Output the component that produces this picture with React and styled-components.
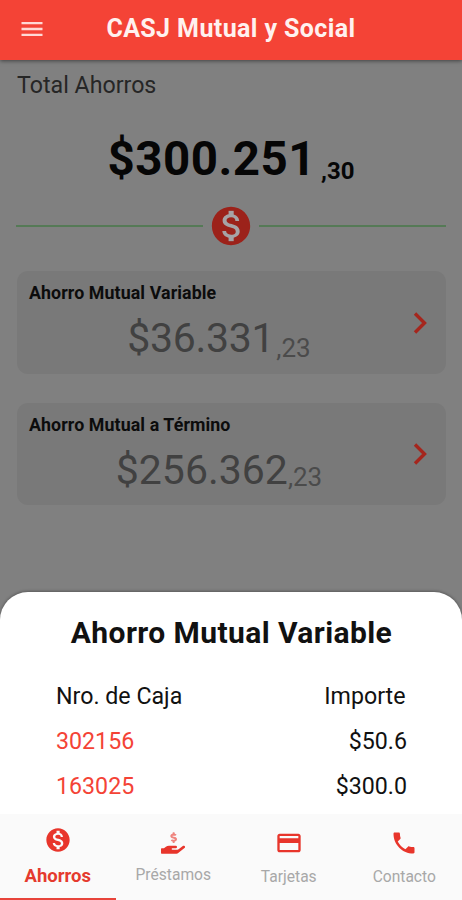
import React from 'react';
import styled, { createGlobalStyle } from 'styled-components';
import { MdMenu, MdMonetizationOn, MdCreditCard, MdPhone } from 'react-icons/md';
import { FaHandHoldingUsd } from 'react-icons/fa';

const GlobalStyle = createGlobalStyle`
  * { box-sizing: border-box; }
  body { margin: 0; font-family: Roboto, "Liberation Sans", sans-serif; }
`;

const Screen = styled.div`
  width: 462px;
  height: 900px;
  display: flex;
  flex-direction: column;
  overflow: hidden;
  background: #808080;
`;

const Header = styled.header`
  position: relative;
  height: 60px;
  flex: none;
  display: grid;
  grid-template-columns: 63px 1fr 63px;
  align-items: center;
  justify-items: center;
  padding-bottom: 2px;
  background: #f44336;
  color: #fff;
  box-shadow: 0 1px 4px rgba(0, 0, 0, 0.5);
`;

const MenuButton = styled.button`
  display: flex;
  padding: 0;
  border: 0;
  background: none;
  color: #ffd9d5;
  font-size: 28px;
`;

const Title = styled.h1`
  margin: 0;
  font-size: 25px;
  line-height: 30px;
  font-weight: 700;
  white-space: nowrap;
  color: #fff1ef;
  letter-spacing: 0.4px;
`;

const Main = styled.main`
  flex: 1;
  min-height: 0;
  padding: 10px 16px 0 16px;
`;

const SectionLabel = styled.h2`
  margin: 0 0 0 1px;
  font-size: 23.2px;
  line-height: 30px;
  font-weight: 400;
  color: #262626;
`;

const Total = styled.div`
  display: flex;
  justify-content: center;
  align-items: baseline;
  height: 58px;
  margin-top: 30px;
  line-height: 58px;
  font-weight: 700;
  color: #060606;
`;

const TotalWhole = styled.span`
  font-size: 47.5px;
  letter-spacing: 0.5px;
`;

const TotalCents = styled.span`
  position: relative;
  top: 4px;
  margin-left: 5px;
  font-size: 24px;
`;

const Divider = styled.div`
  display: flex;
  align-items: center;
  height: 46px;
  margin-top: 15px;
  gap: 5px;
  color: #9c221a;
  font-size: 46px;
`;

const Line = styled.span`
  flex: 1;
  height: 2px;
  background: #557a56;
`;

const CoinFace = styled.span`
  display: flex;
  border-radius: 50%;
  background: radial-gradient(circle, #a6a3a6 0 15px, transparent 15px);
`;

const Card = styled.section`
  display: grid;
  grid-template-columns: 1fr 40px;
  align-items: center;
  height: ${(p) => p.$height}px;
  margin: ${(p) => p.$gap}px 0 0 1px;
  padding: 0 6px 0 12px;
  border-radius: 11px;
  background: #797979;
`;

const CardTitle = styled.h3`
  margin: 0;
  font-size: 17.8px;
  line-height: 22px;
  font-weight: 700;
  color: #0c0c0c;
  letter-spacing: 0.1px;
`;

const CardAmount = styled.div`
  display: flex;
  justify-content: center;
  align-items: baseline;
  height: 50px;
  margin-top: 9px;
  padding-left: 9px;
  line-height: 50px;
  color: #414141;
`;

const Whole = styled.span`
  font-size: 41px;
  letter-spacing: ${(p) => p.$spacing}px;
`;

const Cents = styled.span`
  position: relative;
  top: ${(p) => p.$drop}px;
  margin-left: ${(p) => p.$lead}px;
  font-size: 26px;
  color: #4b4b4b;
`;

const Chevron = styled.svg`
  width: 16px;
  height: 24px;
  justify-self: center;
  fill: none;
  stroke: #a5261d;
  stroke-width: 3.4;
`;

const Sheet = styled.section`
  height: 222px;
  flex: none;
  padding: 23px 55px 0 56px;
  border-radius: 28px 28px 0 0;
  background: #fff;
  box-shadow: 0 -1px 3px rgba(0, 0, 0, 0.3);
  color: #111;
`;

const SheetTitle = styled.h2`
  margin: 0 -30px;
  text-align: center;
  font-size: 30px;
  line-height: 36px;
  font-weight: 700;
  white-space: nowrap;
  letter-spacing: 0.42px;
`;

const SheetRow = styled.div`
  display: flex;
  justify-content: space-between;
  height: 45px;
  align-items: center;
  font-size: 23.2px;
  line-height: 30px;
`;

const HeadRow = styled(SheetRow)`
  padding-right: 1.5px;
`;

const Rows = styled.div`
  margin-top: 22px;
`;

const AccountLink = styled.span`
  color: #f44336;
`;

const Nav = styled.nav`
  display: grid;
  grid-template-columns: repeat(4, 1fr);
  height: 86px;
  flex: none;
  background: #fafafa;
`;

const Tab = styled.button`
  display: flex;
  flex-direction: column;
  align-items: center;
  padding: ${(p) => (p.$active ? 12 : 15)}px 0 0;
  border: 0;
  border-bottom: 2px solid ${(p) => (p.$active ? '#e8443a' : 'transparent')};
  background: none;
  font-family: inherit;
  font-size: ${(p) => (p.$active ? 18.5 : 15.6)}px;
  font-weight: ${(p) => (p.$active ? 700 : 400)};
  line-height: ${(p) => (p.$active ? 24 : 22)}px;
  color: ${(p) => (p.$active ? '#e53a2e' : '#a8a8a8')};
`;

const TabIcon = styled.span`
  display: flex;
  align-items: center;
  justify-content: center;
  height: 28px;
  margin-bottom: ${(p) => p.$below}px;
  font-size: ${(p) => p.$size}px;
  color: #e8352b;
`;

const HandIcon = styled(FaHandHoldingUsd)`
  mask-image: linear-gradient(rgba(0, 0, 0, 0.6) 0 55%, #000 55%);
`;

const cards = [
  { title: 'Ahorro Mutual Variable', whole: '$36.331', cents: ',23', height: 103, gap: 22, drop: 5, lead: 2, spacing: -0.3 },
  { title: 'Ahorro Mutual a Término', whole: '$256.362', cents: ',23', height: 102, gap: 29, drop: 2, lead: 0, spacing: 0 },
];

const accounts = [
  { number: '302156', amount: '$50.6' },
  { number: '163025', amount: '$300.0' },
];

const tabs = [
  { label: 'Ahorros', Icon: MdMonetizationOn, size: 28, below: 10, active: true },
  { label: 'Préstamos', Icon: HandIcon, size: 24, below: 7 },
  { label: 'Tarjetas', Icon: MdCreditCard, size: 28, below: 9 },
  { label: 'Contacto', Icon: MdPhone, size: 28, below: 9 },
];

export default function App() {
  return (
    <Screen>
      <GlobalStyle />
      <Header>
        <MenuButton aria-label="Menú"><MdMenu /></MenuButton>
        <Title>CASJ Mutual y Social</Title>
      </Header>
      <Main>
        <SectionLabel>Total Ahorros</SectionLabel>
        <Total>
          <TotalWhole>$300.251</TotalWhole>
          <TotalCents>,30</TotalCents>
        </Total>
        <Divider>
          <Line />
          <CoinFace><MdMonetizationOn /></CoinFace>
          <Line />
        </Divider>
        {cards.map((c) => (
          <Card key={c.title} $height={c.height} $gap={c.gap}>
            <div>
              <CardTitle>{c.title}</CardTitle>
              <CardAmount>
                <Whole $spacing={c.spacing}>{c.whole}</Whole>
                <Cents $drop={c.drop} $lead={c.lead}>{c.cents}</Cents>
              </CardAmount>
            </div>
            <Chevron viewBox="0 0 16 24">
              <path d="M3 2.5 L12.5 12 L3 21.5" />
            </Chevron>
          </Card>
        ))}
      </Main>
      <Sheet>
        <SheetTitle>Ahorro Mutual Variable</SheetTitle>
        <Rows>
          <HeadRow>
            <span>Nro. de Caja</span>
            <span>Importe</span>
          </HeadRow>
          {accounts.map((a) => (
            <SheetRow key={a.number}>
              <AccountLink>{a.number}</AccountLink>
              <span>{a.amount}</span>
            </SheetRow>
          ))}
        </Rows>
      </Sheet>
      <Nav>
        {tabs.map(({ label, Icon, size, below, active }) => (
          <Tab key={label} $active={active}>
            <TabIcon $size={size} $below={below}><Icon /></TabIcon>
            {label}
          </Tab>
        ))}
      </Nav>
    </Screen>
  );
}
